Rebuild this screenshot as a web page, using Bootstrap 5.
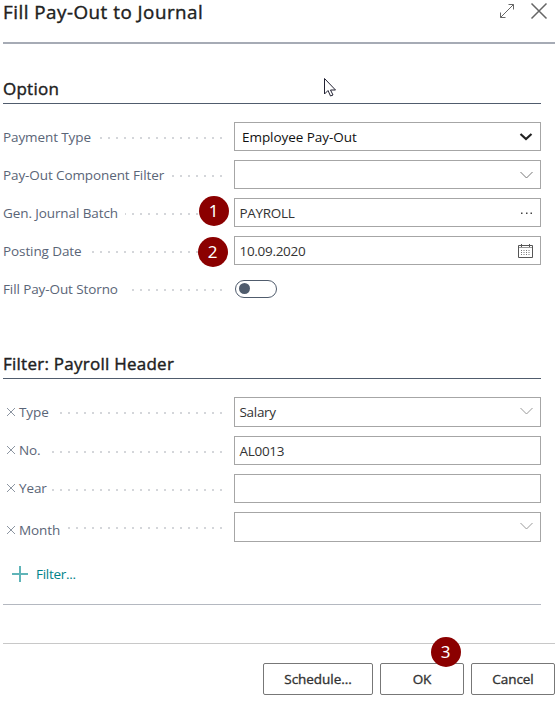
<!DOCTYPE html>
<html lang="en">
<head>
<meta charset="utf-8">
<title>Fill Pay-Out to Journal</title>
<link href="https://cdn.jsdelivr.net/npm/bootstrap@5.3.0/dist/css/bootstrap.min.css" rel="stylesheet">
<style>
body{font-family:"Open Sans","Noto Sans",sans-serif;font-size:13.5px;line-height:20px;color:#2b2b2b;background:#fff}
.dialog{width:555px;height:713px;padding-left:3px}
.dialog-head{height:44px;border-bottom:2px solid #a6abb5}
.dialog-tools{padding-right:4px}
.dialog-title{font-size:18.8px;line-height:24px;font-weight:500;letter-spacing:.5px;color:#212121;-webkit-text-stroke:.4px #212121}
.form-area{width:538px}
.section-title{font-size:17px;line-height:24px;font-weight:500;letter-spacing:.25px;color:#212121;-webkit-text-stroke:.4px #212121;border-bottom:1px solid #505c6d}
.section-option{height:60px;padding-bottom:2px}
.section-filter{height:67px;padding-bottom:2px}
.option-rows,.filter-rows{padding-top:18px}
.field-row{height:29px;margin-bottom:9px}
.field-row.tall{height:30px}
.field-row.last{margin-bottom:0}
.field-row.last .field-label>svg,.field-row.last .field-label>span{margin-top:6px}
.field-label{width:219px;color:#5a6577;white-space:nowrap;letter-spacing:-.1px}
.dots{height:2px;margin:2px 0 0 7px;background:repeating-linear-gradient(to left,#d4d6da 0 2px,transparent 2px 8px)}
.lift{padding-bottom:1px}
.lift .dots{margin-top:4px}
.field-box{width:307px;border:1px solid #a6a6a6;padding:0 7px 0 4.5px;color:#333;letter-spacing:-.3px;background:#fff}
.field-box.native{padding-left:7px;color:#111;letter-spacing:-.05px}
.chevron-up{margin-bottom:2px}
.switch{width:42px;height:18px;border:1.4px solid #505c6d;border-radius:9px;padding-left:3px;margin-left:1px}
.switch-cell{width:307px}
.knob{width:11px;height:11px;background:#505c6d}
.add-filter{height:63px;padding:2px 0 0 9px;letter-spacing:-.3px;color:#00838a;border-bottom:1px solid #b4b8c0}
.dialog-foot{margin-top:38px;padding-top:19px;gap:7px;border-top:1px solid #c8c8c8}
.btn-dialog{width:84px;height:32px;padding:0;border:1px solid #777;border-radius:2px;font-size:13.5px;font-weight:500;line-height:20px;letter-spacing:-.05px;color:#333;-webkit-text-stroke:.35px #333}
.btn-wide{width:110px}
.step{width:30px;height:30px;background:#8b0000;color:#fff;font-family:"Noto Sans",sans-serif;font-size:17px;line-height:29px}
.step-1{left:198.5px;top:195.5px}
.step-2{left:197.5px;top:236.5px}
.step-3{left:430.5px;top:636.5px}
.pointer{left:324px;top:78px}
svg{display:block;flex-shrink:0}
</style>
<script src="https://cdn.jsdelivr.net/npm/bootstrap@5.3.0/dist/js/bootstrap.bundle.min.js"></script>
</head>
<body class="position-relative overflow-hidden">
<main class="dialog">
  <header class="dialog-head d-flex justify-content-between align-items-start">
    <h1 class="dialog-title mb-0">Fill Pay-Out to Journal</h1>
    <div class="dialog-tools d-flex gap-2">
      <svg width="17" height="23" viewBox="0 0 17 23" fill="none" stroke="#666"><path d="M1.500 17.500 14.500 4.500M9.500 4.500h5v5M1.500 12.500v5h5"/></svg>
      <svg class="ms-1" width="23" height="23" viewBox="0 0 23 23" fill="none" stroke="#666" stroke-width="1.500"><path d="m3.500 3.500 15 15m0-15-15 15"/></svg>
    </div>
  </header>
  <div class="form-area">
    <h2 class="section-title section-option d-flex align-items-end mb-0">Option</h2>
    <div class="option-rows">
      <div class="field-row d-flex">
        <div class="field-label d-flex align-items-center"><span>Payment Type</span><i class="dots flex-fill"></i></div>
        <div class="field-box native d-flex align-items-center justify-content-between ms-auto">Employee Pay-Out
          <svg width="14" height="10" viewBox="0 0 14 10" fill="none" stroke="#222" stroke-width="2.200"><path d="m1.500 2 5.500 5 5.500-5"/></svg></div>
      </div>
      <div class="field-row d-flex">
        <div class="field-label d-flex align-items-center"><span>Pay-Out Component Filter</span><i class="dots flex-fill"></i></div>
        <div class="field-box d-flex align-items-center justify-content-end ms-auto">
          <svg width="13" height="8" viewBox="0 0 13 8" fill="none" stroke="#777"><path d="m.5 1 6 6 6-6"/></svg></div>
      </div>
      <div class="field-row d-flex">
        <div class="field-label d-flex align-items-center"><span>Gen. Journal Batch</span><i class="dots flex-fill"></i></div>
        <div class="field-box d-flex align-items-center justify-content-between ms-auto">PAYROLL
          <svg width="13" height="4" viewBox="0 0 13 4" fill="#444"><path d="M1 1.500h1.500V3H1zM6 1.500h1.500V3H6zM10.500 1.500H12V3h-1.500z"/></svg></div>
      </div>
      <div class="field-row d-flex">
        <div class="field-label d-flex align-items-center"><span>Posting Date</span><i class="dots flex-fill"></i></div>
        <div class="field-box d-flex align-items-center justify-content-between ms-auto">10.09.2020
          <svg width="15" height="16" viewBox="0 0 15 16" fill="none" stroke="#555"><path d="M.5 2.500h14v12H.5z"/><path d="M1 4.500h13" stroke="#999"/><path d="M3.500 1v3M11.500 1v3"/><path d="M3 7.500h10M3 9.500h10M3 11.500h10" stroke="#777" stroke-dasharray="1 1.500"/></svg></div>
      </div>
      <div class="field-row d-flex align-items-center">
        <div class="field-label d-flex align-items-center"><span>Fill Pay-Out Storno</span><i class="dots flex-fill ms-2"></i></div>
        <div class="switch-cell ms-auto"><div class="switch d-flex align-items-center"><i class="knob rounded-circle"></i></div></div>
      </div>
    </div>
    <h2 class="section-title section-filter d-flex align-items-end mb-0">Filter: Payroll Header</h2>
    <div class="filter-rows">
      <div class="field-row tall d-flex">
        <div class="field-label d-flex align-items-center"><svg class="ms-1 me-1" width="8" height="8" viewBox="0 0 8 8" stroke="#8c95a1"><path d="m0 0 8 8M8 0 0 8"/></svg><span>Type</span><i class="dots flex-fill"></i></div>
        <div class="field-box d-flex align-items-center justify-content-between ms-auto">Salary
          <svg class="chevron-up" width="13" height="8" viewBox="0 0 13 8" fill="none" stroke="#999"><path d="m.5 1 6 6 6-6"/></svg></div>
      </div>
      <div class="field-row d-flex">
        <div class="field-label lift d-flex align-items-center"><svg class="ms-1 me-1" width="8" height="8" viewBox="0 0 8 8" stroke="#8c95a1"><path d="m0 0 8 8M8 0 0 8"/></svg><span>No.</span><i class="dots flex-fill"></i></div>
        <div class="field-box d-flex align-items-center ms-auto">AL0013</div>
      </div>
      <div class="field-row d-flex">
        <div class="field-label lift d-flex align-items-center"><svg class="ms-1 me-1" width="8" height="8" viewBox="0 0 8 8" stroke="#8c95a1"><path d="m0 0 8 8M8 0 0 8"/></svg><span>Year</span><i class="dots flex-fill ms-1"></i></div>
        <div class="field-box ms-auto"></div>
      </div>
      <div class="field-row tall last d-flex">
        <div class="field-label d-flex align-items-center"><svg class="ms-1 me-1" width="8" height="8" viewBox="0 0 8 8" stroke="#8c95a1"><path d="m0 0 8 8M8 0 0 8"/></svg><span>Month</span><i class="dots flex-fill"></i></div>
        <div class="field-box d-flex align-items-center justify-content-end ms-auto">
          <svg class="chevron-up" width="13" height="8" viewBox="0 0 13 8" fill="none" stroke="#999"><path d="m.5 1 6 6 6-6"/></svg></div>
      </div>
    </div>
    <div class="add-filter d-flex align-items-center">
      <svg width="16" height="16" viewBox="0 0 16 16" fill="none" stroke="#5fb4b8" stroke-width="2"><path d="M8 0v16M0 8h16"/></svg><span class="ms-2">Filter...</span>
    </div>
  </div>
  <footer class="dialog-foot d-flex justify-content-end">
    <button type="button" class="btn btn-dialog btn-wide">Schedule...</button>
    <button type="button" class="btn btn-dialog">OK</button>
    <button type="button" class="btn btn-dialog">Cancel</button>
  </footer>
</main>
<span class="step step-1 position-absolute rounded-circle text-center">1</span>
<span class="step step-2 position-absolute rounded-circle text-center">2</span>
<span class="step step-3 position-absolute rounded-circle text-center">3</span>
<svg class="pointer position-absolute" width="13" height="20" viewBox="0 0 13 20" fill="#fff" stroke="#223"><path d="M.5.5v15.500l3.500-3.500 2.500 5.500 2.500-1-2.500-5h5z"/></svg>
</body>
</html>
